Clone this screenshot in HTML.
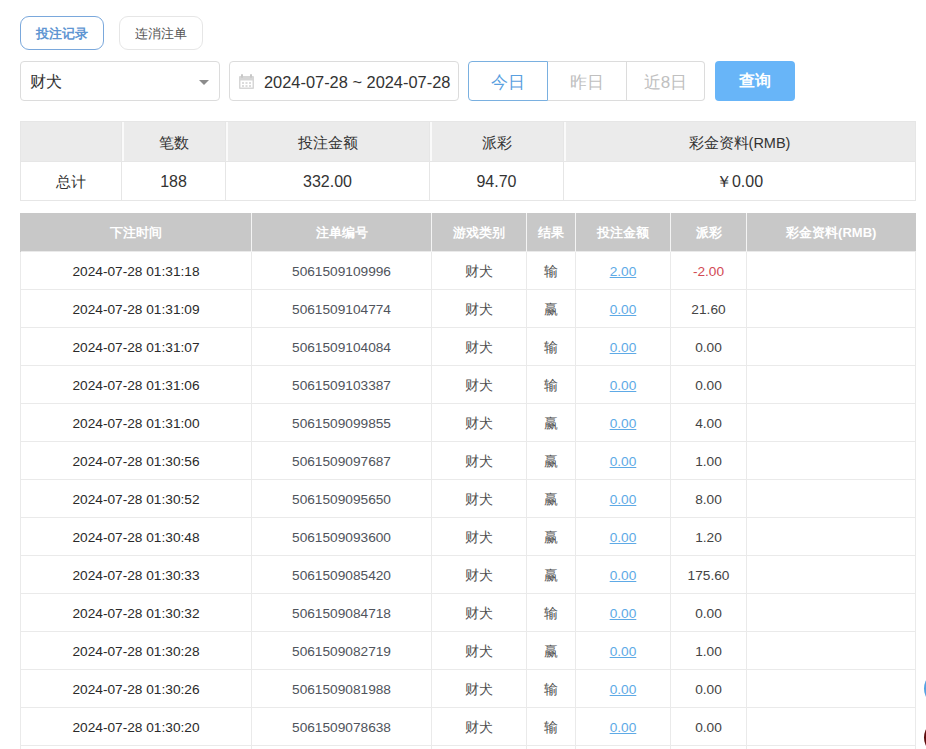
<!DOCTYPE html>
<html><head><meta charset="utf-8">
<style>
*{box-sizing:border-box;margin:0;padding:0}
html,body{width:926px;height:749px;overflow:hidden;background:#fff}
body{font-family:"Liberation Sans",sans-serif;color:#333;position:relative}
.abs{position:absolute}
.tab{position:absolute;top:16px;height:34px;width:84px;border:1px solid #e6e6e6;border-radius:9px;font-size:13px;text-align:center;line-height:32px;color:#555;padding-top:0.5px}
.tab.on{border-color:#7aa8dc;color:#5f96d2;font-weight:bold}
.sel{left:20px;top:61px;width:200px;height:40px;border:1px solid #dcdcdc;border-radius:4px;font-size:15.5px;line-height:38px;padding-left:9px;color:#333;padding-top:1px}
.tri{position:absolute;left:199px;top:80px;width:0;height:0;border-left:5px solid transparent;border-right:5px solid transparent;border-top:5px solid #8c8c8c}
.date{left:229px;top:61px;width:230px;height:40px;border:1px solid #dcdcdc;border-radius:4px;font-size:16.4px;line-height:38px;padding-left:34px;padding-top:1px;color:#333;white-space:nowrap;overflow:hidden}
.seg{position:absolute;top:61px;height:40px;width:79px;border:1px solid #dcdcdc;font-size:17px;line-height:38px;padding-top:2px;text-align:center;color:#c0c0c0}
.seg.on{border-color:#7ab0e0;color:#5aa0e0}
.q{left:715px;top:61px;width:80px;height:40px;background:#68b5f8;border-radius:4px;color:#fff;font-size:15.5px;font-weight:bold;text-align:center;line-height:40px}
table{border-collapse:collapse;table-layout:fixed;position:absolute;left:20px;width:896px}
td,th{text-align:center;font-weight:normal}
.sum{top:121px}
.sum td{border:1px solid #e6e6e6;font-size:14.5px;color:#333;padding-top:4px}
.sum tr.h td{background:#ebebeb;height:40px}
.sum tr.h td+td{box-shadow:inset 2px 0 0 #fafafa}
.sum tr.d td{height:39px;padding-top:2px}
.sum td.n{font-size:16px}
.main{top:213px}
.main th{background:#c8c8c8;color:#fff;font-weight:bold;font-size:13px;height:38px;border-left:1px solid #f4f4f4;padding-top:2px}
.main th:first-child{border-left:1px solid #c8c8c8}
.main td{border:1px solid #eaeaea;height:38px;font-size:13.7px;color:#333;padding-top:2px}
.c{font-size:14px;position:relative;top:1px}
.main td u{color:#5eaae6}
.main td:nth-child(1){color:#2a2a2a}
.main td:nth-child(2){color:#50545c}
.main td:nth-child(3),.main td:nth-child(4){color:#505050}
.main td:nth-child(6){color:#444}
.main td.neg{color:#d24a55}
</style></head><body>
<div class="tab on" style="left:20px">投注记录</div>
<div class="tab" style="left:119px">连消注单</div>
<div class="abs sel">财犬</div>
<div class="tri"></div>
<div class="abs date">2024-07-28 ~ 2024-07-28</div>
<svg class="abs" style="left:239px;top:74px" width="15" height="15" viewBox="0 0 15 15"><rect x="0" y="2" width="15" height="13" rx="1" fill="#d6d6d6"/><rect x="1.5" y="6.5" width="12" height="7" fill="#fff"/><rect x="2" y="0" width="2" height="4" rx="1" fill="#c8c8c8"/><rect x="11" y="0" width="2" height="4" rx="1" fill="#c8c8c8"/><g fill="#dcdcdc"><rect x="3" y="8" width="2" height="2"/><rect x="6.5" y="8" width="2" height="2"/><rect x="10" y="8" width="2" height="2"/><rect x="3" y="11" width="2" height="2"/><rect x="6.5" y="11" width="2" height="2"/><rect x="10" y="11" width="2" height="2"/></g></svg>
<div class="seg on" style="left:468px;width:80px;border-radius:4px 0 0 4px">今日</div>
<div class="seg" style="left:548px;border-left:none">昨日</div>
<div class="seg" style="left:627px;width:78px;border-left:none;border-radius:0 4px 4px 0">近8日</div>
<div class="abs q">查询</div>
<table class="sum">
<colgroup><col style="width:101px"><col style="width:104px"><col style="width:204px"><col style="width:134px"><col></colgroup>
<tr class="h"><td></td><td>笔数</td><td>投注金额</td><td>派彩</td><td>彩金资料(RMB)</td></tr>
<tr class="d"><td>总计</td><td class="n">188</td><td class="n">332.00</td><td class="n">94.70</td><td class="n">￥0.00</td></tr>
</table>
<table class="main">
<colgroup><col style="width:231px"><col style="width:180px"><col style="width:95px"><col style="width:49px"><col style="width:95px"><col style="width:76px"><col></colgroup>
<tr><th>下注时间</th><th>注单编号</th><th>游戏类别</th><th>结果</th><th>投注金额</th><th>派彩</th><th>彩金资料(RMB)</th></tr>
<tr><td>2024-07-28 01:31:18</td><td>5061509109996</td><td><span class="c">财犬</span></td><td><span class="c">输</span></td><td><u>2.00</u></td><td class="neg">-2.00</td><td></td></tr>
<tr><td>2024-07-28 01:31:09</td><td>5061509104774</td><td><span class="c">财犬</span></td><td><span class="c">赢</span></td><td><u>0.00</u></td><td>21.60</td><td></td></tr>
<tr><td>2024-07-28 01:31:07</td><td>5061509104084</td><td><span class="c">财犬</span></td><td><span class="c">输</span></td><td><u>0.00</u></td><td>0.00</td><td></td></tr>
<tr><td>2024-07-28 01:31:06</td><td>5061509103387</td><td><span class="c">财犬</span></td><td><span class="c">输</span></td><td><u>0.00</u></td><td>0.00</td><td></td></tr>
<tr><td>2024-07-28 01:31:00</td><td>5061509099855</td><td><span class="c">财犬</span></td><td><span class="c">赢</span></td><td><u>0.00</u></td><td>4.00</td><td></td></tr>
<tr><td>2024-07-28 01:30:56</td><td>5061509097687</td><td><span class="c">财犬</span></td><td><span class="c">赢</span></td><td><u>0.00</u></td><td>1.00</td><td></td></tr>
<tr><td>2024-07-28 01:30:52</td><td>5061509095650</td><td><span class="c">财犬</span></td><td><span class="c">赢</span></td><td><u>0.00</u></td><td>8.00</td><td></td></tr>
<tr><td>2024-07-28 01:30:48</td><td>5061509093600</td><td><span class="c">财犬</span></td><td><span class="c">赢</span></td><td><u>0.00</u></td><td>1.20</td><td></td></tr>
<tr><td>2024-07-28 01:30:33</td><td>5061509085420</td><td><span class="c">财犬</span></td><td><span class="c">赢</span></td><td><u>0.00</u></td><td>175.60</td><td></td></tr>
<tr><td>2024-07-28 01:30:32</td><td>5061509084718</td><td><span class="c">财犬</span></td><td><span class="c">输</span></td><td><u>0.00</u></td><td>0.00</td><td></td></tr>
<tr><td>2024-07-28 01:30:28</td><td>5061509082719</td><td><span class="c">财犬</span></td><td><span class="c">赢</span></td><td><u>0.00</u></td><td>1.00</td><td></td></tr>
<tr><td>2024-07-28 01:30:26</td><td>5061509081988</td><td><span class="c">财犬</span></td><td><span class="c">输</span></td><td><u>0.00</u></td><td>0.00</td><td></td></tr>
<tr><td>2024-07-28 01:30:20</td><td>5061509078638</td><td><span class="c">财犬</span></td><td><span class="c">输</span></td><td><u>0.00</u></td><td>0.00</td><td></td></tr>
<tr><td>2024-07-28 01:30:18</td><td>5061509077000</td><td><span class="c">财犬</span></td><td><span class="c">输</span></td><td><u>0.00</u></td><td>0.00</td><td></td></tr>
</table>
<div class="abs" style="left:924px;top:671px;width:35px;height:35px;border-radius:50%;background:#55a2e2"></div>
<div class="abs" style="left:924px;top:720px;width:35px;height:35px;border-radius:50%;background:#5e0c0c"></div>
</body></html>
